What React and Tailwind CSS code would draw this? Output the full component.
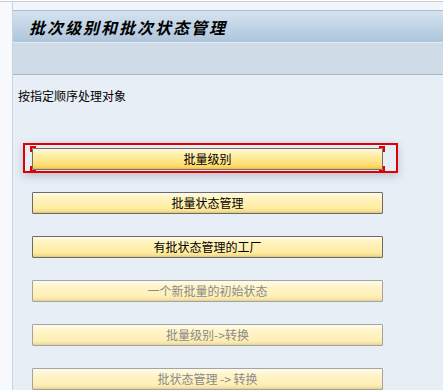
const buttons = [
  { label: "批量级别", state: "focused" },
  { label: "批量状态管理", state: "enabled" },
  { label: "有批状态管理的工厂", state: "enabled" },
  { label: "一个新批量的初始状态", state: "disabled" },
  { label: "批量级别->转换", state: "disabled" },
  { label: "批状态管理 -> 转换", state: "disabled" },
];

const SapButton = ({ label, state }) => {
  const base =
    "w-[351px] h-[22px] flex items-center justify-center text-[12px] leading-none border rounded-[1px]";

  const styles = {
    focused:
      "border-[#747068] text-black bg-[linear-gradient(to_bottom,#fff8dc_0%,#ffefb0_25%,#ffe17e_70%,#ffd55a_90%,#d8b865_100%)]",
    enabled:
      "border-[#6b6b6b] text-black bg-[linear-gradient(to_bottom,#fffbe6_0%,#fff3c0_25%,#ffeda2_75%,#f7e192_90%,#dcc47c_100%)]",
    disabled:
      "border-[#a3a3a3] text-[#8a8a8a] bg-[linear-gradient(to_bottom,#fffcec_0%,#fff5cc_25%,#fff0b6_75%,#f7e6aa_90%,#e3cf92_100%)]",
  };

  const btn = <div className={`${base} ${styles[state]}`}>{label}</div>;

  if (state !== "focused") return btn;

  return (
    <div className="relative w-[351px]">
      {/* focus frame */}
      <div className="absolute left-[-9px] top-[-5px] w-[375px] h-[30px] border-2 border-[#e00000] shadow-[0_3px_8px_rgba(60,80,110,0.28)]" />
      <div className="absolute left-[-2px] top-[-2px] w-[6px] h-[6px] border-l-2 border-t-2 border-[#e00000]" />
      <div className="absolute left-[-2px] bottom-[-2px] w-[6px] h-[6px] border-l-2 border-b-2 border-[#e00000]" />
      <div className="absolute right-[-2px] top-[-2px] w-[6px] h-[6px] border-r-2 border-t-2 border-[#e00000]" />
      <div className="absolute right-[-2px] bottom-[-2px] w-[6px] h-[6px] border-r-2 border-b-2 border-[#e00000]" />
      <div className="relative">{btn}</div>
    </div>
  );
};

const App = () => {
  return (
    <div
      className="w-[443px] h-[390px] overflow-hidden bg-white flex flex-col"
      style={{ fontFamily: '"Noto Sans CJK SC", "Noto Sans", sans-serif' }}
    >
      {/* top rule */}
      <div className="h-[1px] bg-white shrink-0" />
      <div className="h-[1px] bg-[#c9cdd3] shrink-0" />

      <div className="flex flex-1 min-h-0">
        {/* left margin */}
        <div className="w-[12px] shrink-0 bg-[#f7f9fc]" />

        {/* main panel */}
        <div className="flex-1 flex flex-col border-l border-[#c6d3e1]">
          <div className="h-[8px] bg-[#f2f5f9] shrink-0" />

          {/* title bar */}
          <div className="h-[32px] shrink-0 flex items-center pl-[16px] border-t border-[#a8bbd0] bg-[linear-gradient(to_bottom,#d6e3ef,#adc5dc)]">
            <h1 className="text-[16px] font-bold italic tracking-[2px] text-black leading-none">
              批次级别和批次状态管理
            </h1>
          </div>

          {/* toolbar area */}
          <div className="h-[33px] shrink-0 bg-[#cfdce8] border-t border-[#e4ecf4] border-b border-b-[#a6b7ca]" />

          {/* content */}
          <div className="flex-1 bg-[#e7eef6] pl-[5px] pt-[14px]">
            <p className="text-[12px] leading-[14px] text-black">
              按指定顺序处理对象
            </p>

            <div className="flex flex-col items-start gap-[22px] mt-[45px] ml-[14px]">
              {buttons.map((b) => (
                <SapButton key={b.label} label={b.label} state={b.state} />
              ))}
            </div>
          </div>
        </div>
      </div>
    </div>
  );
};

export default App;
